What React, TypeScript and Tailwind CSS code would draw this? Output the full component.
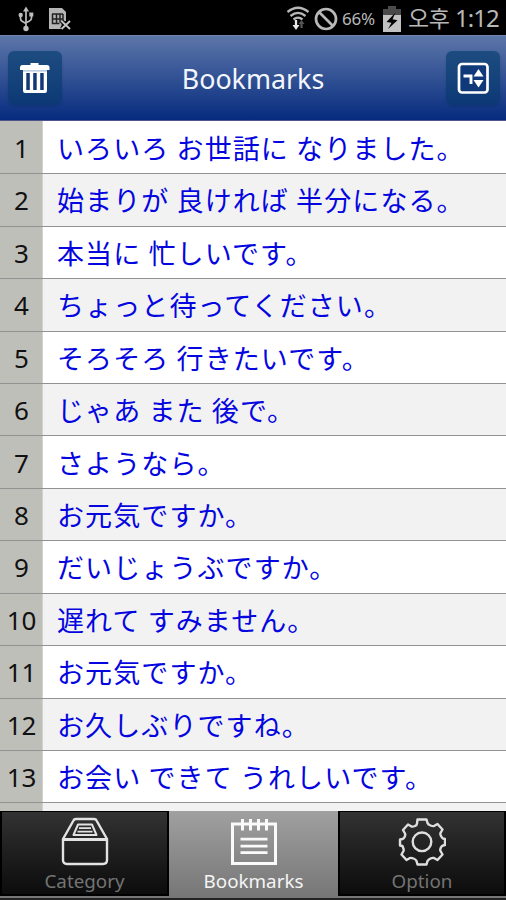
const SENTENCES = [
  "いろいろ お世話に なりました。",
  "始まりが 良ければ 半分になる。",
  "本当に 忙しいです。",
  "ちょっと待ってください。",
  "そろそろ 行きたいです。",
  "じゃあ また 後で。",
  "さようなら。",
  "お元気ですか。",
  "だいじょうぶですか。",
  "遅れて すみません。",
  "お元気ですか。",
  "お久しぶりですね。",
  "お会い できて うれしいです。",
  "",
];

function UsbIcon() {
  return (
    <svg width="16" height="26" viewBox="0 0 16 26" fill="none" stroke="#bdbdbd" strokeWidth="1.7">
      <path d="M8 4v18M2.5 10v2.5q0 2 2 3l3.5 2M13.5 9v3q0 2-2 3L8 16.800" />
      <path d="M8 0.500l3 5H5z" fill="#bdbdbd" stroke="none" />
      <circle cx="8" cy="22.500" r="2.700" fill="#bdbdbd" stroke="none" />
      <circle cx="2.700" cy="9" r="2.200" fill="#bdbdbd" stroke="none" />
      <path d="M11.300 6.500h4v4h-4z" fill="#bdbdbd" stroke="none" />
    </svg>
  );
}

function SimIcon() {
  return (
    <svg width="23" height="24" viewBox="0 0 23 24" fill="none">
      <path d="M0 1h13l4 4v9l-4 1-1 7H0z" fill="#b5b5b5" />
      <path d="M3 7h11M3.500 7v9.500h7M7.500 7.500v9M11 7.500v8M4 12h10M14 7v6" stroke="#222" strokeWidth="1.500" />
      <path d="M12.500 14l8.500 8M21 14l-8.500 8" stroke="#000" strokeWidth="4" />
      <path d="M12.500 14l8.500 8M21 14l-8.500 8" stroke="#c4c4c4" strokeWidth="2" />
    </svg>
  );
}

function WifiIcon() {
  return (
    <svg width="24" height="25" viewBox="0 0 24 25" fill="none" stroke="#b8b8b8" strokeWidth="2.300">
      <path d="M1.500 6Q12-2.500 22.500 6M4.500 10Q12 3.800 19.500 10M7.500 13.500Q12 9.800 16.500 13.500" />
      <path d="M10 14v5" stroke="#e8e8e8" />
      <path d="M6.500 19h7L10 24z" fill="#e8e8e8" stroke="none" />
      <path d="M15.500 22v-5" stroke="#555" />
      <path d="M12.500 18l3-4 3 4z" fill="#555" stroke="none" />
    </svg>
  );
}

function BlockIcon() {
  return (
    <svg width="24" height="24" viewBox="0 0 24 24" fill="none" stroke="#b8b8b8" strokeWidth="2.700">
      <circle cx="12" cy="12" r="10" />
      <path d="M5 5l14 14" />
    </svg>
  );
}

function BatteryIcon() {
  return (
    <svg width="18" height="26" viewBox="0 0 18 26">
      <path d="M5 0h8v3h5v6H0V3h5z" fill="#4a4a4a" />
      <path d="M0 9h18v17H0z" fill="#c2c2c2" />
      <path d="M12.500 6.500L3.500 16l5 .8L5 23l9.500-8.800-5-1z" fill="#000" />
    </svg>
  );
}

function TrashIcon() {
  return (
    <svg width="30" height="32" viewBox="0 0 30 32">
      <path d="M10.500 1h8v2H27q2.500 0 2.500 2.500V8H0V5.500Q0 3 2.500 3h8z" fill="#fff" />
      <path d="M3 7.500h24v21q0 2.500-2 2.500H5q-2 0-2-2.500z" fill="#fff" />
      <path d="M6.300 11h3.500v17H6.300zM13.200 11h3.500v17h-3.500zM20.200 11h3.500v17h-3.500z" fill="#123878" />
      <path d="M3 8.900h24" stroke="#7f9cc4" strokeWidth="0.800" />
    </svg>
  );
}

function ToggleIcon() {
  return (
    <svg width="32" height="32" viewBox="0 0 32 32" fill="none">
      <rect x="2" y="2" width="28.500" height="28.500" rx="3" fill="#10397a" stroke="#fff" strokeWidth="2.700" />
      <path d="M6.500 14h7.500v8" stroke="#fff" strokeWidth="2.900" />
      <path d="M16.500 14.500l5-7.500 5 7.500zM16.500 18h10l-5 7.500z" fill="#fff" />
    </svg>
  );
}

function CategoryIcon() {
  return (
    <svg width="48" height="50" viewBox="0 0 48 50" fill="none" stroke="#e2e2e2" strokeWidth="2.400" strokeLinejoin="round">
      <path d="M2 22L12.500 3.500Q13 2 15 2h18q2 0 2.500 1.500L46 22v21q0 4-4 4H6q-4 0-4-4z" />
      <path d="M2 22.500h44" strokeWidth="3" />
      <path d="M12.500 18L17 7.500h14L35.500 18z" strokeWidth="2" />
      <path d="M18 11.200h12M16.500 14.700h15" strokeWidth="1.700" />
    </svg>
  );
}

function BookmarksIcon() {
  return (
    <svg width="48" height="50" viewBox="0 0 48 50" fill="none" stroke="#fafafa" strokeWidth="3">
      <path d="M2.500 7h43v39.500h-43z" />
      <path d="M12.500 2v11.500M20.500 2v11.500M28.500 2v11.500M36.500 2v11.500" />
      <path d="M10.500 22.200h27M10.500 29.200h27M10.500 35.700h27" strokeWidth="2.700" />
    </svg>
  );
}

function OptionIcon() {
  return (
    <svg width="48" height="50" viewBox="0 0 48 50" fill="none" stroke="#dedede" strokeWidth="2.400" strokeLinejoin="round">
      <path d="M19.500 2.500h9l1 3.500q.5 1.500 3 2.500t3.500.5l3.500-2 5 5.500-2 3.500q-.5 1 .5 3t2 2.500l2 .5v6l-2 .5q-1.500.5-2.300 2.500t-.2 3l2 3.500-5 5.500-3.500-2q-1.500-.5-3.500.5t-3 2.500l-1 3.500h-9l-1-3.500q-.5-1.500-3-2.500t-3.500-.5l-3.500 2-5-5.500 2-3.500q.5-1-.3-3T4.500 29l-2.500-.5v-6L4.500 22q1.500-.5 2.300-2.500t.2-3l-2-3.500 5-5.500 3.500 2q1.500.5 3.500-.5t2-2.500z" />
      <circle cx="24" cy="24.800" r="9.300" />
    </svg>
  );
}

const TABS = [
  { label: "Category", icon: CategoryIcon, active: false },
  { label: "Bookmarks", icon: BookmarksIcon, active: true },
  { label: "Option", icon: OptionIcon, active: false },
];

export default function App() {
  return (
    <div className="flex h-[900px] w-[506px] flex-col overflow-hidden bg-black font-['Noto_Sans','Noto_Sans_CJK_JP',sans-serif]">
      <div className="flex h-[35px] shrink-0 items-center bg-black pl-[18px] pr-[8px] pt-[2px] text-[#b8b8b8]">
        <UsbIcon />
        <div className="ml-[15px]">
          <SimIcon />
        </div>
        <div className="ml-auto flex items-center">
          <WifiIcon />
          <div className="ml-[4px]">
            <BlockIcon />
          </div>
          <span className="ml-[4px] w-[34px] whitespace-nowrap text-[17px] leading-none tracking-[-0.2px]">66%</span>
          <div className="ml-[7px] mr-[7px]">
            <BatteryIcon />
          </div>
          <span className="w-[42px] whitespace-nowrap pb-[4px] font-['Noto_Sans_CJK_KR',sans-serif] text-[23px] leading-[28px] tracking-[-0.5px]">
            오후
          </span>
          <span className="ml-[5px] w-[43px] whitespace-nowrap pb-[2px] text-[24px] leading-none tracking-[-1px]">1:12</span>
        </div>
      </div>

      <header className="flex h-[86px] shrink-0 items-center justify-between border-b border-t border-b-[#50558c] border-t-[#7082b0] bg-linear-to-b from-[#5d76a9] to-[#062a7e] pl-[8px] pr-[6px]">
        <button type="button" className="flex h-[54px] w-[54px] items-center justify-center rounded-[6px] bg-linear-to-b from-[#1d4c80] to-[#0c3975] shadow">
          <TrashIcon />
        </button>
        <h1 className="-ml-[2px] pt-[3px] text-[26.8px] leading-none text-[#f4f6fb]">Bookmarks</h1>
        <button type="button" className="flex h-[54px] w-[54px] items-center justify-center rounded-[6px] bg-linear-to-b from-[#1d4c80] to-[#0c3975] shadow">
          <ToggleIcon />
        </button>
      </header>

      <main className="h-[690px] shrink-0 overflow-hidden bg-white">
        {SENTENCES.map((sentence, i) => (
          <div
            key={i}
            className="flex h-[52.45px] border-b border-[#929292] odd:bg-white even:bg-[#f2f2f2] first:h-[53.2px]"
          >
            <div className="flex w-[43px] shrink-0 items-center justify-center border-r border-[#d2d2ce] bg-[#bfbfba] pl-px pt-px text-[26px] leading-none text-[#111]">
              {sentence && i + 1}
            </div>
            <div className="flex items-center whitespace-pre pl-[14px] font-['Noto_Sans_CJK_JP',sans-serif] text-[27px] leading-none tracking-[1.1px] text-[#0505e0]">
              {sentence}
            </div>
          </div>
        ))}
      </main>

      <nav className="grid h-[85px] shrink-0 grid-cols-[169px_169px_168px]">
        {TABS.map(({ label, icon: Icon, active }) => (
          <button
            key={label}
            type="button"
            className={`flex flex-col items-center ${
              active
                ? "bg-linear-to-b from-[#a0a0a0] to-[#777777] pt-[6px] text-[#f5f5f5]"
                : "border-2 border-t border-black bg-linear-to-b from-[#333333] to-[#0c0c0c] pt-[5px] text-[#747474]"
            }`}
          >
            <Icon />
            <span className="mt-[4px] text-[18.8px] leading-[21px]">{label}</span>
          </button>
        ))}
      </nav>
      <div className="h-[2px] shrink-0 bg-[#777]" />
      <div className="grow bg-[#222]" />
    </div>
  );
}
